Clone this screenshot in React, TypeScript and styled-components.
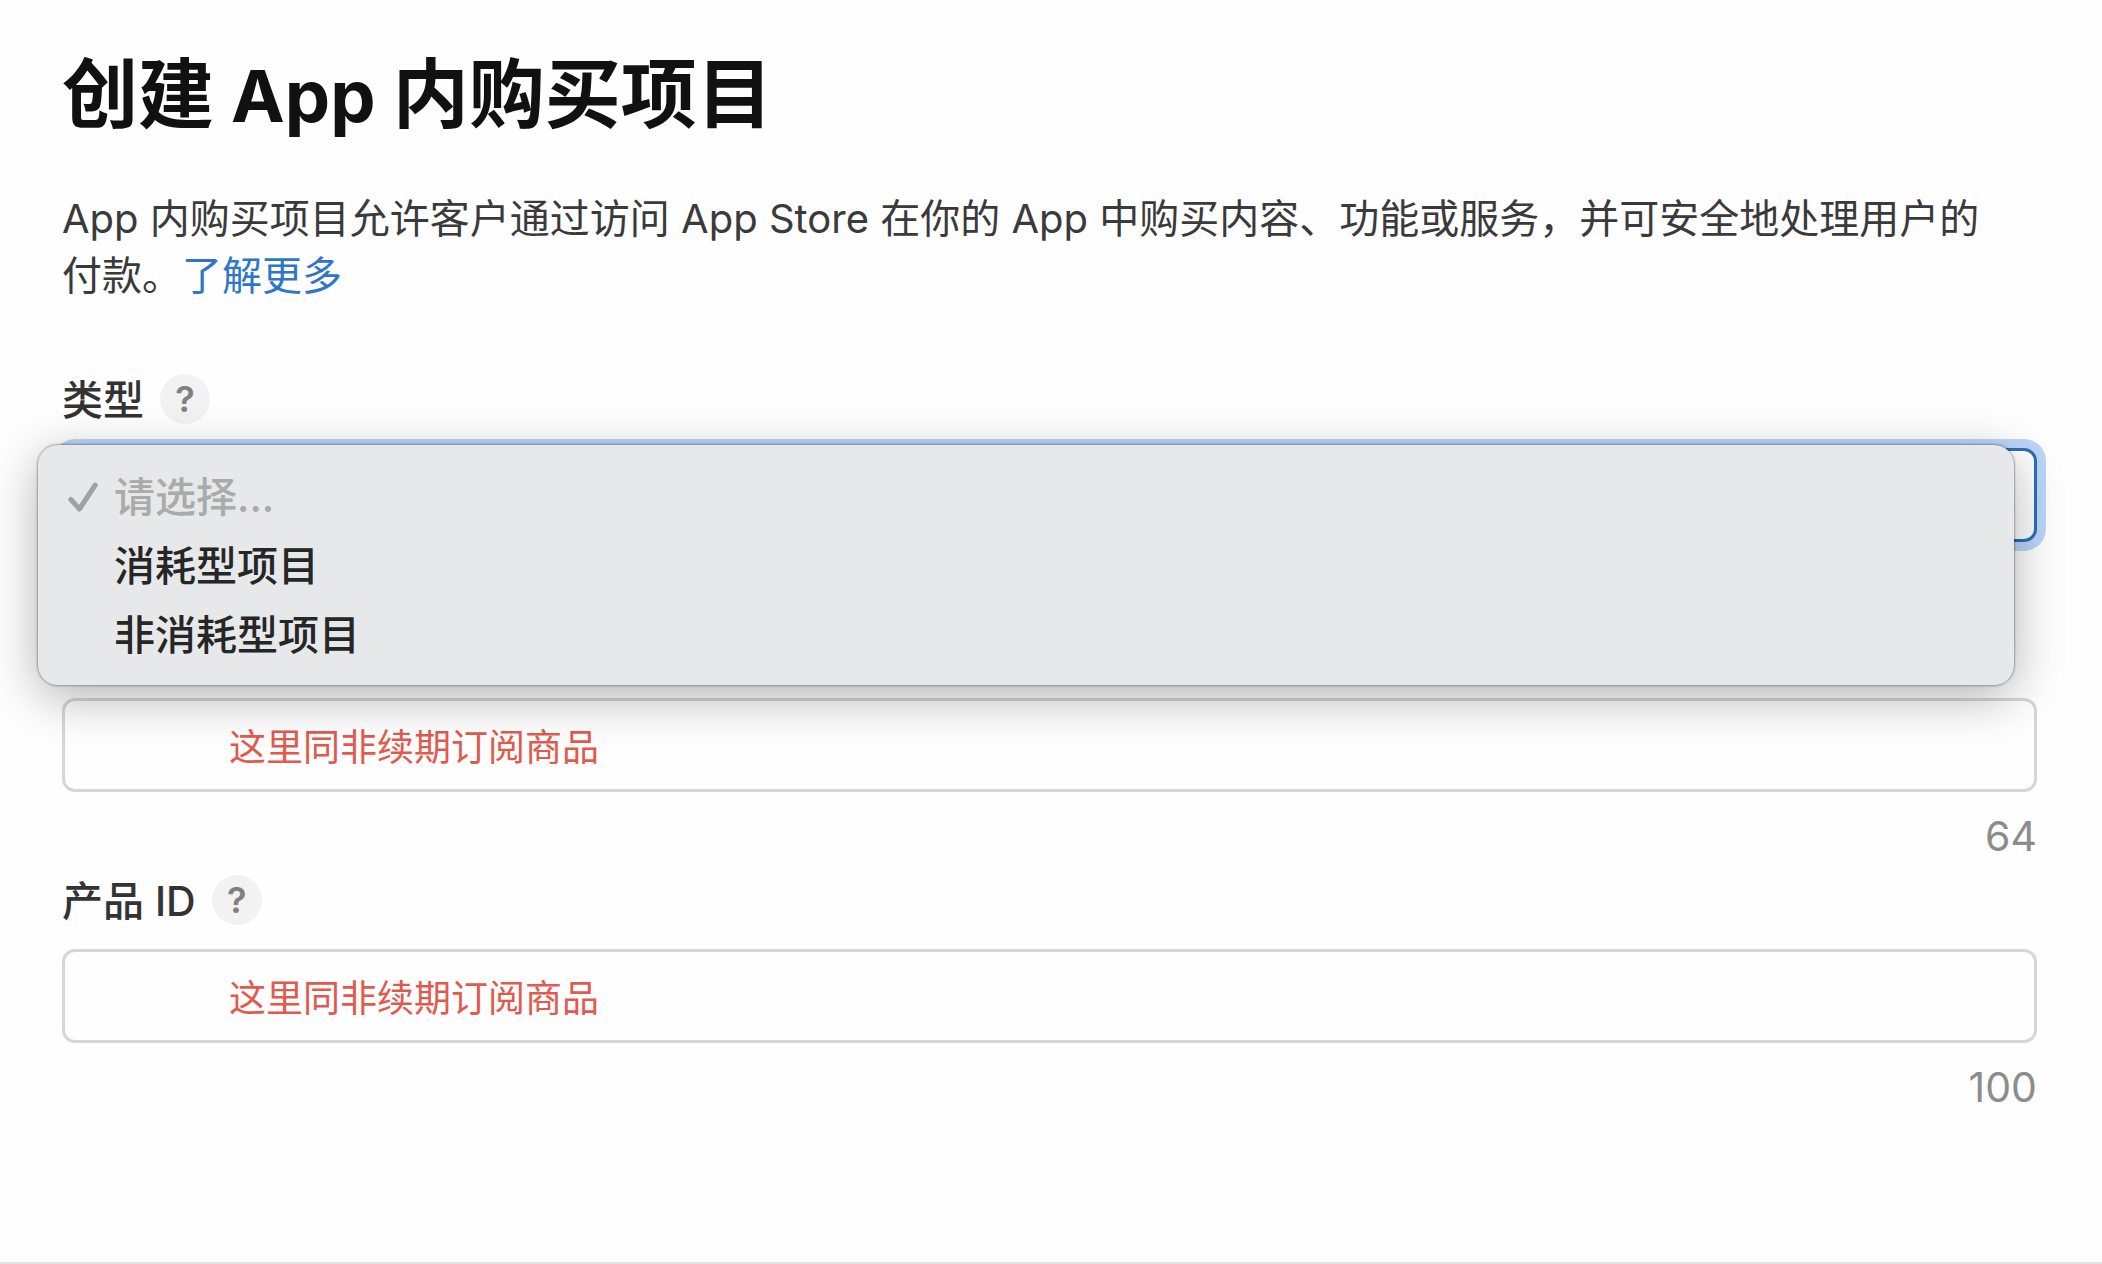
import React, { useState } from "react";
import styled, { createGlobalStyle } from "styled-components";

const GlobalStyle = createGlobalStyle`
  *, *::before, *::after { box-sizing: border-box; }
  body {
    margin: 0;
    background: #fefefe;
    color: #3a3a3a;
    font-family: Inter, "Noto Sans CJK SC", sans-serif;
  }
`;

const Page = styled.main`
  display: flex;
  flex-direction: column;
  min-height: 100vh;
  padding: 46px 65px 0 62px;
  border-bottom: 2px solid #e4e4e4;
`;

const Title = styled.h1`
  margin: 0;
  font-size: 76px;
  line-height: 96px;
  font-weight: 700;
  color: #111;
`;

const Latin = styled.span`
  font-size: 72px;
`;

const Intro = styled.p`
  margin: 46px 0 70px;
  padding-right: 24px;
  font-size: 40px;
  line-height: 57px;
`;

const Link = styled.a`
  color: #2f76c8;
  text-decoration: none;
`;

const Form = styled.form`
  display: flex;
  flex-direction: column;
`;

const LabelRow = styled.div`
  display: flex;
  align-items: center;
  gap: 16px;
  height: 50px;
  margin-bottom: 24px;
`;

const Label = styled.label`
  padding-top: 2px;
  font-size: 41px;
  line-height: 48px;
  font-weight: 500;
  color: #333;
`;

const HelpButton = styled.button`
  width: 50px;
  height: 50px;
  padding: 0;
  border: 0;
  border-radius: 50%;
  background: #f2f2f2;
  color: #808080;
  font-family: inherit;
  font-size: 36px;
  line-height: 48px;
  font-weight: 600;
`;

const SelectWrap = styled.div`
  position: relative;
  margin-bottom: 156px;
`;

const Select = styled.select`
  display: block;
  appearance: none;
  width: 100%;
  height: 94px;
  padding: 0 24px;
  border: 3px solid #2c6fb8;
  border-radius: 13px;
  outline: none;
  background: #fff;
  color: #3a3a3a;
  font-family: inherit;
  font-size: 40px;
  box-shadow: 0 0 0 9px #bcd6f8;
`;

const Menu = styled.ul`
  position: absolute;
  top: -3px;
  left: -24px;
  right: 23px;
  margin: 0;
  padding: 17px 0 16px;
  list-style: none;
  border-radius: 20px;
  background: #e6e8e9;
  box-shadow: 0 0 2px 1px rgba(0, 0, 0, 0.3), 0 12px 50px rgba(0, 0, 0, 0.3);
`;

const Option = styled.li<{ $muted?: boolean }>`
  display: grid;
  grid-template-columns: 30px 1fr;
  column-gap: 16px;
  align-items: center;
  height: 69px;
  padding-left: 30px;
  font-size: 41px;
  line-height: 48px;
  font-weight: 500;
  color: ${(p) => (p.$muted ? "#a8aaab" : "#262626")};
`;

const OptionText = styled.span`
  grid-column: 2;
`;

const Input = styled.input`
  width: 100%;
  height: 94px;
  padding: 0 24px 0 164px;
  border: 3px solid #d6d6d6;
  border-radius: 13px;
  outline: none;
  background: transparent;
  color: #e25a4e;
  font-family: inherit;
  font-size: 37px;
`;

const Counter = styled.output`
  margin: 20px 0 15px;
  font-size: 41px;
  line-height: 48px;
  text-align: right;
  color: #8c8c8c;
`;

const Check = () => (
  <svg width="30" height="30" viewBox="0 0 30 30" fill="none" aria-hidden="true">
    <path
      d="M2.8 17.5 11.5 27 27.2 3.2"
      stroke="#9fa1a2"
      strokeWidth="5"
      strokeLinecap="round"
      strokeLinejoin="round"
    />
  </svg>
);

const types = ["请选择...", "消耗型项目", "非消耗型项目"];

export default function App() {
  const [name, setName] = useState("这里同非续期订阅商品");
  const [productId, setProductId] = useState("这里同非续期订阅商品");

  return (
    <>
      <GlobalStyle />
      <Page lang="zh-CN">
        <Title>
          创建<Latin> App </Latin>内购买项目
        </Title>
        <Intro>
          App 内购买项目允许客户通过访问 App Store 在你的 App 中购买内容、功能或服务，并可安全地处理用户的付款。
          <Link href="#more">了解更多</Link>
        </Intro>
        <Form>
          <LabelRow>
            <Label htmlFor="type">类型</Label>
            <HelpButton type="button">?</HelpButton>
          </LabelRow>
          <SelectWrap>
            <Select id="type">
              {types.map((t) => (
                <option key={t}>{t}</option>
              ))}
            </Select>
            <Menu role="listbox" aria-label="类型">
              {types.map((t, i) => (
                <Option key={t} role="option" aria-selected={i === 0} $muted={i === 0}>
                  {i === 0 && <Check />}
                  <OptionText>{t}</OptionText>
                </Option>
              ))}
            </Menu>
          </SelectWrap>
          <Input aria-label="名称" value={name} onChange={(e) => setName(e.target.value)} />
          <Counter>64</Counter>
          <LabelRow>
            <Label htmlFor="product-id">产品 ID</Label>
            <HelpButton type="button">?</HelpButton>
          </LabelRow>
          <Input id="product-id" value={productId} onChange={(e) => setProductId(e.target.value)} />
          <Counter htmlFor="product-id">100</Counter>
        </Form>
      </Page>
    </>
  );
}
